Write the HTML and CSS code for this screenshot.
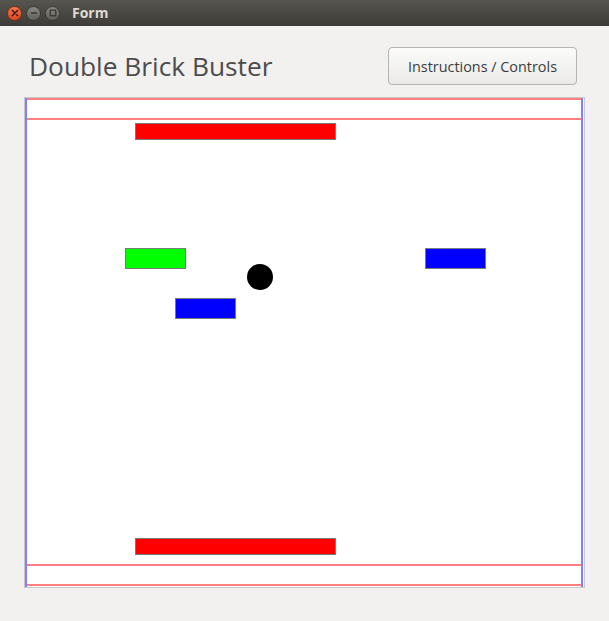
FILE: index.html
```html
<!DOCTYPE html>
<html>
<head>
<meta charset="utf-8">
<link rel="stylesheet" href="styles.css">
</head>
<body>
<div class="window">
  <div class="titlebar">
    <div class="controls">
      <span class="wbtn close">
        <svg width="8" height="8" viewBox="0 0 8 8"><path d="M1.2 1.2L6.8 6.8M6.8 1.2L1.2 6.8" stroke="#3a1a10" stroke-width="1.4" stroke-linecap="round"/></svg>
      </span>
      <span class="wbtn">
        <svg width="8" height="8" viewBox="0 0 8 8"><path d="M1 4H7" stroke="#35342f" stroke-width="1.4"/></svg>
      </span>
      <span class="wbtn">
        <svg width="8" height="8" viewBox="0 0 8 8"><rect x="1.2" y="1.2" width="5.6" height="5.6" fill="none" stroke="#35342f" stroke-width="1.2"/></svg>
      </span>
    </div>
    <span class="wtitle">Form</span>
  </div>
  <div class="content">
    <div class="header">
      <h1 class="title">Double Brick Buster</h1>
      <button class="btn">Instructions / Controls</button>
    </div>
    <div class="panel">
      <div class="line hline" style="top:0px"></div>
      <div class="line hline" style="top:20px"></div>
      <div class="line hline" style="top:466px"></div>
      <div class="line hline" style="top:486px"></div>
      <div class="line vline" style="left:0px"></div>
      <div class="line vline" style="left:556px"></div>
      <div class="brick red" style="left:110px;top:25px;width:199px;height:15px"></div>
      <div class="brick red" style="left:110px;top:440px;width:199px;height:15px"></div>
      <div class="brick green" style="left:100px;top:150px;width:59px;height:19px"></div>
      <div class="brick blue" style="left:150px;top:200px;width:59px;height:19px"></div>
      <div class="brick blue" style="left:400px;top:150px;width:59px;height:19px"></div>
      <div class="ball" style="left:222px;top:166px"></div>
    </div>
  </div>
</div>
</body>
</html>
```
FILE: styles.css
```css
html, body {
  margin: 0;
  padding: 0;
}
body {
  width: 609px;
  height: 621px;
  background: #f2f1f0;
  overflow: hidden;
}
.window {
  width: 609px;
  height: 621px;
  display: flex;
  flex-direction: column;
}
.titlebar {
  height: 26px;
  background: linear-gradient(#57554f, #3c3b37);
  display: flex;
  align-items: center;
  box-sizing: border-box;
  padding-left: 7px;
}
.controls {
  display: flex;
  gap: 4px;
}
.wbtn {
  width: 15px;
  height: 15px;
  border-radius: 50%;
  box-sizing: border-box;
  border: 1px solid #3a3934;
  background: linear-gradient(#8a8882, #63615c);
  display: flex;
  align-items: center;
  justify-content: center;
}
.wbtn.close {
  background: linear-gradient(#f47a4e, #e0451e);
  border-color: #7a2d14;
}
.wtitle {
  margin-left: 12px;
  font-family: "Open Sans", "DejaVu Sans", sans-serif;
  font-weight: 700;
  font-size: 14px;
  color: #dfdbd2;
  line-height: 26px;
}
.content {
  display: flex;
  flex-direction: column;
  padding: 21px 0 0 24px;
}
.header {
  display: flex;
  justify-content: space-between;
  align-items: center;
  height: 38px;
  padding-left: 5px;
  padding-right: 32px;
  box-sizing: border-box;
  width: 585px;
}
.title {
  margin: 0;
  font-family: "Open Sans", "DejaVu Sans", sans-serif;
  font-weight: 400;
  font-size: 26.3px;
  color: #4c4c4c;
}
.btn {
  width: 189px;
  height: 38px;
  border: 1px solid #b6b4b0;
  border-radius: 4px;
  background: linear-gradient(#fbfbfa, #ebeae8);
  font-family: "Open Sans", "DejaVu Sans", sans-serif;
  font-size: 14.4px;
  color: #3c3c3c;
  padding: 0;
}
.panel {
  margin-top: 12px;
  position: relative;
  width: 561px;
  height: 491px;
  box-sizing: border-box;
  border: 1px solid #c8c8c8;
  background: #ffffff;
}
.line {
  position: absolute;
}
.hline {
  left: 0;
  width: 558px;
  height: 2px;
  background: #ff8080;
}
.vline {
  top: 0;
  width: 2px;
  height: 489px;
  background: #8080ff;
}
.brick {
  position: absolute;
  border: 1px solid #7a7a7a;
}
.red { background: #ff0000; }
.green { background: #00ff00; }
.blue { background: #0000ff; }
.ball {
  position: absolute;
  width: 26px;
  height: 26px;
  border-radius: 50%;
  background: #000000;
}
```
